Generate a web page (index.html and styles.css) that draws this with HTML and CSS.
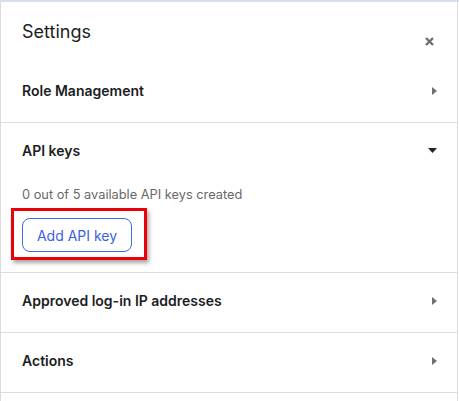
FILE: index.html
```html
<!DOCTYPE html>
<html>
<head>
<meta charset="utf-8">
<link rel="stylesheet" href="styles.css">
</head>
<body>
<div class="topbar"></div>
<div class="panel">
  <div class="header">
    <h1 class="title">Settings</h1>
    <svg class="close" width="9" height="9" viewBox="0 0 9 9"><path d="M1 1L8 8M8 1L1 8" stroke="#6f6f6f" stroke-width="2.4" stroke-linecap="butt"/></svg>
  </div>
  <div class="row">
    <span class="label">Role Management</span>
    <svg class="arrow" width="5" height="8" viewBox="0 0 5 8"><path d="M0 0L5 4L0 8Z" fill="#6b6f76"/></svg>
  </div>
  <div class="section">
    <div class="row open">
      <span class="label">API keys</span>
      <svg class="caret" width="9" height="5" viewBox="0 0 9 5"><path d="M0 0H9L4.5 5Z" fill="#1f2328"/></svg>
    </div>
    <div class="body">
      <p class="desc">0 out of 5 available API keys created</p>
      <div class="btnwrap">
        <button class="btn">Add API key</button>
        <div class="highlight"></div>
      </div>
    </div>
  </div>
  <div class="row">
    <span class="label">Approved log-in IP addresses</span>
    <svg class="arrow" width="5" height="8" viewBox="0 0 5 8"><path d="M0 0L5 4L0 8Z" fill="#6b6f76"/></svg>
  </div>
  <div class="row">
    <span class="label">Actions</span>
    <svg class="arrow" width="5" height="8" viewBox="0 0 5 8"><path d="M0 0L5 4L0 8Z" fill="#6b6f76"/></svg>
  </div>
</div>
</body>
</html>
```

FILE: styles.css
```css
html, body {
  margin: 0;
  padding: 0;
  background: #ffffff;
  font-family: Inter, "Noto Sans", sans-serif;
  color: #1c1d1f;
}
.topbar {
  height: 2px;
  background: #d7dfe8;
}
.panel {
  width: 458px;
  border-left: 1px solid #dcdcdc;
  border-right: 1px solid #dcdcdc;
  min-height: 399px;
  box-sizing: border-box;
}
.header {
  height: 61px;
  display: flex;
  justify-content: space-between;
  align-items: flex-start;
  padding: 0 22px 0 21px;
}
.title {
  margin: 19px 0 0 0;
  font-size: 18px;
  font-weight: 400;
  line-height: 22px;
  color: #1c1d1f;
}
.close {
  margin-top: 35px;
  margin-right: 1px;
}
.row {
  height: 59px;
  display: flex;
  align-items: center;
  justify-content: space-between;
  padding: 0 20px 0 21px;
  border-bottom: 1px solid #dedede;
  box-sizing: content-box;
}
.row .label {
  font-size: 14px;
  font-weight: 600;
  margin-top: -4px;
}
.arrow {
  margin-top: -3px;
}
.section {
  border-bottom: 1px solid #dedede;
}
.row.open {
  border-bottom: none;
  height: 58px;
}
.caret {
  margin-top: -4px;
  margin-right: 0;
}
.body {
  padding: 6px 20px 20px 21px;
}
.desc {
  margin: 0 0 15px 0;
  font-size: 12.8px;
  color: #686868;
  line-height: 16px;
}
.btnwrap {
  position: relative;
  display: inline-block;
}
.btn {
  display: block;
  height: 34px;
  width: 110px;
  border: 1px solid #3c6ee6;
  border-radius: 8px;
  background: #fff;
  color: #3c61e0;
  font-family: Inter, "Noto Sans", sans-serif;
  font-size: 14px;
  padding: 0;
  margin: 0;
}
.highlight {
  position: absolute;
  left: -11px;
  top: -10px;
  right: -15px;
  bottom: -8px;
  border: 3px solid #e8000b;
  box-shadow: 2px 3px 4px rgba(0,0,0,0.35);
  pointer-events: none;
}
```
